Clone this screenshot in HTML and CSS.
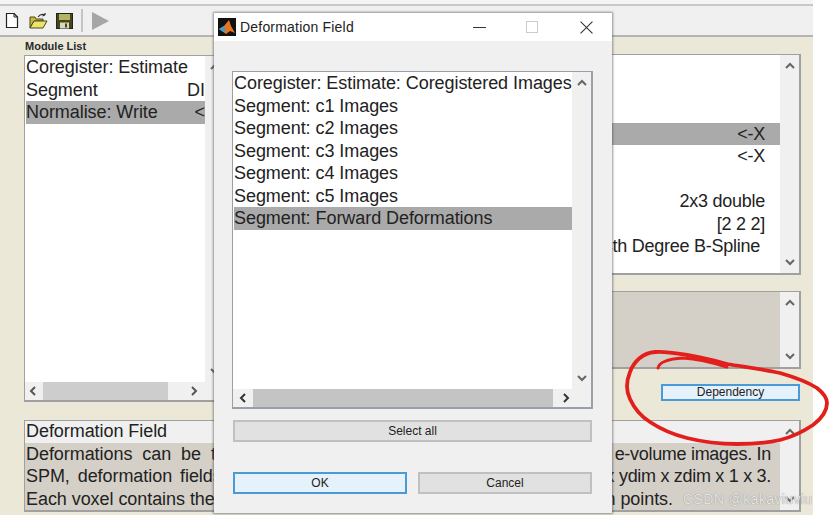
FILE: index.html
```html
<!DOCTYPE html>
<html lang="en">
<head>
    <meta charset="UTF-8">
    <title>Batch Editor</title>
    <link rel="stylesheet" href="styles.css">
</head>
<body>
    <svg class="defs" width="0" height="0">
        <symbol id="chev-up" viewBox="0 0 10 10"><path d="M1 7 L5 3 L9 7" fill="none" stroke="currentColor" stroke-width="2"/></symbol>
        <symbol id="chev-down" viewBox="0 0 10 10"><path d="M1 3 L5 7 L9 3" fill="none" stroke="currentColor" stroke-width="2"/></symbol>
        <symbol id="chev-left" viewBox="0 0 10 10"><path d="M7 1 L3 5 L7 9" fill="none" stroke="currentColor" stroke-width="2"/></symbol>
        <symbol id="chev-right" viewBox="0 0 10 10"><path d="M3 1 L7 5 L3 9" fill="none" stroke="currentColor" stroke-width="2"/></symbol>
    </svg>

    <div class="app">
        <div class="top-strip"></div>
        <div class="toolbar">
            <svg class="tool tool-doc" viewBox="0 0 14 15"><path d="M1.5 0.5 H9 L12.5 4 V14.5 H1.5 Z" fill="#fff" stroke="#222" stroke-width="1.2"/><path d="M9 0.5 V4 H12.5" fill="none" stroke="#222"/></svg>
            <svg class="tool tool-open" viewBox="0 0 19 16"><path d="M1 4 H6 L7 6 H14 V8 H5 L1 15 Z" fill="#c9b93a" stroke="#4d4818"/><path d="M5 8 H18 L14 15 H1 Z" fill="#ece26e" stroke="#4d4818"/><path d="M9 4 Q12 0 16 2 M16 2 L16 0 M16 2 L13.500 3" fill="none" stroke="#333" stroke-width="1.2"/></svg>
            <svg class="tool tool-save" viewBox="0 0 17 16"><rect x="0.5" y="0.5" width="16" height="15" fill="#46461a" stroke="#222"/><rect x="3" y="1" width="11" height="6" fill="#b4b462"/><rect x="4" y="9.500" width="9" height="6" fill="#d7d7c0"/><rect x="9" y="10.500" width="2" height="4" fill="#46461a"/></svg>
            <span class="tool-sep"></span>
            <svg class="tool tool-run" viewBox="0 0 17 18"><path d="M0 0 L17 9 L0 18 Z" fill="#a6a6a6"/></svg>
        </div>

        <div class="main">
            <div class="left-col">
                <div class="panel-label">Module List</div>
                <div class="panel module-list">
                    <div class="panel-row">
                        <div class="rows">
                            <div class="row"><span>Coregister: Estimate</span></div>
                            <div class="row"><span>Segment</span><span class="row-end">DI</span></div>
                            <div class="row selected"><span>Normalise: Write</span><span class="row-end">&lt;</span></div>
                        </div>
                        <div class="vscroll">
                            <svg class="arrow"><use href="#chev-up"/></svg>
                            <svg class="arrow"><use href="#chev-down"/></svg>
                        </div>
                    </div>
                    <div class="hscroll hscroll-left">
                        <svg class="arrow"><use href="#chev-left"/></svg>
                        <div class="thumb"></div>
                        <svg class="arrow"><use href="#chev-right"/></svg>
                    </div>
                </div>
            </div>

            <div class="right-col">
                <div class="panel options">
                    <div class="panel-row">
                        <div class="rows rows-right">
                            <div class="row"></div>
                            <div class="row"></div>
                            <div class="row"></div>
                            <div class="row selected"><span>&lt;-X</span></div>
                            <div class="row"><span>&lt;-X</span></div>
                            <div class="row"></div>
                            <div class="row"><span>2x3 double</span></div>
                            <div class="row"><span>[2 2 2]</span></div>
                            <div class="row row-spline"><span>4th Degree B-Spline</span></div>
                        </div>
                        <div class="vscroll">
                            <svg class="arrow"><use href="#chev-up"/></svg>
                            <svg class="arrow"><use href="#chev-down"/></svg>
                        </div>
                    </div>
                </div>
                <div class="panel values">
                    <div class="panel-row">
                        <div class="rows tan"></div>
                        <div class="vscroll">
                            <svg class="arrow"><use href="#chev-up"/></svg>
                            <svg class="arrow"><use href="#chev-down"/></svg>
                        </div>
                    </div>
                </div>
                <div class="dep-row">
                    <button class="btn btn-focus btn-dep">Dependency</button>
                </div>
            </div>

            <div class="panel help">
                <div class="panel-row">
                    <div class="rows help-text">
                        <div class="help-title">Deformation Field</div>
                        <div class="help-body">
                            <div class="help-line wide"><span>Deformations can be the</span><span class="help-end">e-volume images. In</span></div>
                            <div class="help-line wide-sm"><span>SPM, deformation fields</span><span class="help-end">x ydim x zdim x 1 x 3.</span></div>
                            <div class="help-line help-last"><span>Each voxel contains the</span><span>n points.</span></div>
                        </div>
                    </div>
                    <div class="vscroll">
                        <svg class="arrow"><use href="#chev-up"/></svg>
                        <svg class="arrow"><use href="#chev-down"/></svg>
                    </div>
                </div>
            </div>
        </div>
    </div>

    <!-- dialog window floats over the editor -->
    <div class="dialog">
        <div class="titlebar">
            <svg class="app-icon" viewBox="0 0 18 18"><rect width="18" height="18" fill="#111"/><path d="M1 11 L6 8 L11 2 L13 8 L17 15 L12 13 L8 16 Z" fill="#e8741e"/><path d="M1 11 L6 8 L8 12 L5 14 Z" fill="#3b9fd0"/></svg>
            <span class="title">Deformation Field</span>
            <span class="win-btn win-min"></span>
            <span class="win-btn win-max"></span>
            <svg class="win-close" viewBox="0 0 12 12"><path d="M0.5 0.5 L11.5 11.5 M11.5 0.5 L0.5 11.5" stroke="#333" stroke-width="1"/></svg>
        </div>
        <div class="dialog-body">
            <div class="panel dialog-list">
                <div class="panel-row">
                    <div class="rows">
                        <div class="row"><span>Coregister: Estimate: Coregistered Images</span></div>
                        <div class="row"><span>Segment: c1 Images</span></div>
                        <div class="row"><span>Segment: c2 Images</span></div>
                        <div class="row"><span>Segment: c3 Images</span></div>
                        <div class="row"><span>Segment: c4 Images</span></div>
                        <div class="row"><span>Segment: c5 Images</span></div>
                        <div class="row selected"><span>Segment: Forward Deformations</span></div>
                    </div>
                    <div class="vscroll">
                        <svg class="arrow"><use href="#chev-up"/></svg>
                        <svg class="arrow"><use href="#chev-down"/></svg>
                    </div>
                </div>
                <div class="hscroll hscroll-dialog">
                    <svg class="arrow"><use href="#chev-left"/></svg>
                    <div class="thumb"></div>
                    <svg class="arrow"><use href="#chev-right"/></svg>
                </div>
            </div>
            <button class="btn btn-all">Select all</button>
            <div class="dialog-actions">
                <button class="btn btn-focus">OK</button>
                <button class="btn">Cancel</button>
            </div>
        </div>
    </div>

    <!-- hand drawn red circle on top of the screenshot -->
    <svg class="scribble" viewBox="0 0 831 515">
        <path d="M658 368 C659 362 668 359 683 358 C698 359 714 363 727 367" fill="none" stroke="#e31f1c" stroke-width="3" stroke-linecap="round"/>
        <path d="M727 364 C712 360 700 357 687 355 C675 353 665 351 655 352 C643 353 634 361 630 372 C626 382 626 391 630 399 C635 410 642 417 650 422 C662 430 675 435 687 438 C703 442 720 444 737 444 C752 444 767 443 780 440 C792 437 804 431 813 425 C821 419 827 411 827 403 C827 397 822 392 817 388 C806 381 794 377 780 373 C762 369 745 367 727 364" fill="none" stroke="#e31f1c" stroke-width="3.8" stroke-linecap="round" stroke-linejoin="round"/>
    </svg>

    <div class="watermark">CSDN @kakaviuviu</div>
</body>
</html>
```

FILE: styles.css
```css
body {
    margin: 0;
    width: 831px;
    height: 515px;
    overflow: hidden;
    position: relative;
    background-color: white;
    font-family: "Liberation Sans", Arial, sans-serif;
    color: #222;
}

.defs {
    position: absolute;
}

.app {
    width: 813px;
    height: 515px;
    background-color: #ebe8d8;
}

/* toolbar */
.top-strip {
    height: 4px;
    background-color: #f4f4f4;
}

.toolbar {
    height: 29px;
    display: flex;
    align-items: center;
    padding-left: 5px;
    background-color: #f0f0f0;
    border-top: 2px solid #c8c8c8;
    border-bottom: 2px solid #b4b4b4;
}

.tool {
    flex: none;
}

.tool-doc {
    width: 14px;
    height: 15px;
}

.tool-open {
    width: 19px;
    height: 16px;
    margin-left: 10px;
}

.tool-save {
    width: 17px;
    height: 16px;
    margin-left: 8px;
}

.tool-sep {
    width: 2px;
    height: 23px;
    margin-left: 8px;
    background-color: #c4c4c4;
}

.tool-run {
    width: 17px;
    height: 18px;
    margin-left: 9px;
}

/* main layout */
.main {
    display: grid;
    grid-template-columns: 202px 1fr;
    column-gap: 14px;
    row-gap: 18px;
    padding: 4px 12px 0 24px;
}

.panel-label {
    height: 14px;
    font-size: 11px;
    font-weight: bold;
    line-height: 11px;
    color: #2a2a2a;
    padding-left: 1px;
}

.panel {
    display: flex;
    flex-direction: column;
    box-sizing: border-box;
    border: solid #a0a0a0;
    border-width: 1px 2px 2px 1px;
    background-color: white;
    overflow: hidden;
}

.panel-row {
    flex: 1;
    display: flex;
    min-height: 0;
}

.rows {
    flex: 1;
    min-width: 0;
    padding-left: 1px;
    font-size: 18px;
    letter-spacing: -0.06px;
    background-color: white;
}

.row {
    height: 22.55px;
    line-height: 22px;
    display: flex;
    justify-content: space-between;
    white-space: nowrap;
}

.selected {
    background-color: #aaaaaa;
}

.vscroll {
    width: 19px;
    flex: none;
    display: flex;
    flex-direction: column;
    justify-content: space-between;
    align-items: center;
    padding: 6px 0;
    background-color: #f0f0f0;
    color: #666;
}

.arrow {
    width: 10px;
    height: 10px;
    flex: none;
}

.hscroll {
    height: 18px;
    flex: none;
    display: flex;
    align-items: center;
    background-color: #f0f0f0;
    color: #555;
    padding: 0 5px;
    gap: 4px;
}

.thumb {
    height: 100%;
    background-color: #cdcdcd;
}

/* left column */
.module-list {
    height: 347px;
}

.hscroll-left {
    padding-left: 3px;
}

.hscroll-left .thumb {
    width: 125px;
    margin-left: 1px;
}

.hscroll-left .thumb + .arrow {
    margin-left: 17px;
}

/* right column */
.right-col {
    display: flex;
    flex-direction: column;
    margin-top: 13px;
}

.options {
    height: 221px;
}

.rows-right {
    letter-spacing: -0.25px;
}

.rows-right .row {
    justify-content: flex-end;
    padding-right: 15px;
}

.rows-right .row-spline {
    padding-right: 20px;
}

.values {
    height: 78px;
    margin-top: 16px;
}

.tan {
    background-color: #d4d0c8;
}

.dep-row {
    display: flex;
    justify-content: flex-end;
    margin-top: 15px;
    padding-right: 1px;
}

/* buttons */
.btn {
    height: 22px;
    padding: 0;
    box-sizing: border-box;
    font-family: inherit;
    font-size: 12px;
    color: #222;
    background-color: #e1e1e1;
    border: 2px solid #c0c0c0;
}

.btn-focus {
    background-color: #e5f1fb;
    border-color: #4a9ad8;
}

.btn-dep {
    width: 139px;
    height: 17px;
    line-height: 13px;
}

/* help panel */
.help {
    grid-column: 1 / 3;
    height: 92px;
}

.help-text {
    padding-left: 0;
    background-color: #d4d0c8;
}

.help-title {
    height: 22px;
    line-height: 21px;
    padding-left: 1px;
    background-color: #f0f0f0;
}

.help-body {
    padding: 0 9px 0 1px;
}

.help-line {
    height: 22.4px;
    line-height: 22px;
    display: flex;
    justify-content: space-between;
    white-space: nowrap;
}

.help-end {
    letter-spacing: -0.3px;
}

.wide span:first-child {
    word-spacing: 5px;
}

.wide-sm span:first-child {
    word-spacing: 3px;
}

.help-last {
    padding-right: 98px;
}

/* dialog */
.dialog {
    position: absolute;
    left: 214px;
    top: 13px;
    width: 398px;
    height: 500px;
    background-color: #f0f0f0;
    box-shadow: 0 0 2px 1px rgba(70, 70, 70, 0.55);
}

.titlebar {
    height: 28px;
    display: flex;
    align-items: center;
    padding-left: 4px;
    background-color: white;
}

.app-icon {
    width: 18px;
    height: 18px;
    flex: none;
}

.title {
    margin-left: 4px;
    width: 233px;
    font-size: 14px;
    letter-spacing: 0.2px;
}

.win-btn {
    flex: none;
    box-sizing: border-box;
}

.win-min {
    width: 13px;
    height: 1px;
    background-color: #333;
}

.win-max {
    width: 12px;
    height: 12px;
    margin-left: 40px;
    border: 1px solid #ccc;
}

.win-close {
    width: 13px;
    height: 13px;
    margin-left: 42px;
    flex: none;
}

.dialog-body {
    padding: 30px 20px 0 18px;
}

.dialog-list {
    height: 338px;
    width: 361px;
    border-color: #9aa0a8;
}

.hscroll-dialog {
    padding-left: 5px;
    color: #333;
}

.hscroll-dialog .thumb {
    width: 300px;
    margin-left: 1px;
    background-color: #c4c4c4;
}

.hscroll-dialog .thumb + .arrow {
    margin-left: 4px;
}

.btn-all {
    display: block;
    width: 359px;
    margin: 11px 0 0 1px;
}

.dialog-actions {
    display: flex;
    gap: 11px;
    margin: 30px 0 0 1px;
}

.dialog-actions .btn {
    width: 174px;
}

/* overlays */
.scribble {
    position: absolute;
    left: 0;
    top: 0;
    width: 831px;
    height: 515px;
    pointer-events: none;
}

.watermark {
    position: absolute;
    left: 683px;
    top: 491px;
    white-space: nowrap;
    font-size: 14px;
    letter-spacing: 0.4px;
    line-height: 16px;
    color: #e6e6e6;
    text-shadow: 0 0 1px #777;
}
```
